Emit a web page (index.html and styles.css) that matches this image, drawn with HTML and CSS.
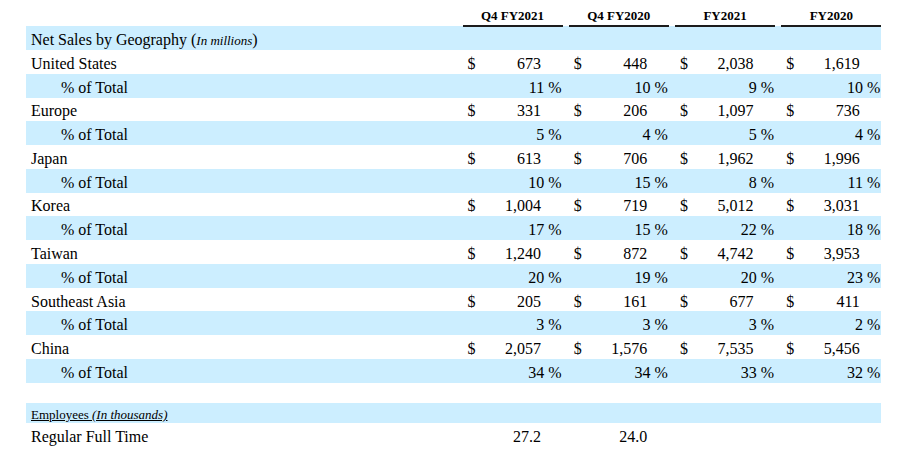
FILE: index.html
```html
<!DOCTYPE html>
<html>
<head>
<meta charset="utf-8">
<link rel="stylesheet" href="styles.css">
</head>
<body>
<table class="geo">
  <colgroup>
    <col class="c-label">
    <col class="c-dol"><col class="c-num"><col class="c-pc">
    <col class="c-gap">
    <col class="c-dol"><col class="c-num"><col class="c-pc">
    <col class="c-gap">
    <col class="c-dol"><col class="c-num"><col class="c-pc">
    <col class="c-gap">
    <col class="c-dol"><col class="c-num"><col class="c-pc">
  </colgroup>
  <thead>
    <tr class="head">
      <th></th>
      <th colspan="3" class="colhead">Q4 FY2021</th><th></th>
      <th colspan="3" class="colhead">Q4 FY2020</th><th></th>
      <th colspan="3" class="colhead">FY2021</th><th></th>
      <th colspan="3" class="colhead">FY2020</th>
    </tr>
  </thead>
  <tbody>
    <tr class="section blue">
      <td class="label">Net Sales by Geography (<span class="note">In millions</span>)</td>
      <td colspan="15"></td>
    </tr>

    <tr class="row">
      <td class="label">United States</td>
      <td class="dol">$</td><td class="num">673</td><td></td><td></td>
      <td class="dol">$</td><td class="num">448</td><td></td><td></td>
      <td class="dol">$</td><td class="num">2,038</td><td></td><td></td>
      <td class="dol">$</td><td class="num">1,619</td><td></td>
    </tr>
    <tr class="row blue">
      <td class="label sub">% of Total</td>
      <td colspan="3" class="pct">11 %</td><td></td>
      <td colspan="3" class="pct">10 %</td><td></td>
      <td colspan="3" class="pct">9 %</td><td></td>
      <td colspan="3" class="pct">10 %</td>
    </tr>

    <tr class="row">
      <td class="label">Europe</td>
      <td class="dol">$</td><td class="num">331</td><td></td><td></td>
      <td class="dol">$</td><td class="num">206</td><td></td><td></td>
      <td class="dol">$</td><td class="num">1,097</td><td></td><td></td>
      <td class="dol">$</td><td class="num">736</td><td></td>
    </tr>
    <tr class="row blue">
      <td class="label sub">% of Total</td>
      <td colspan="3" class="pct">5 %</td><td></td>
      <td colspan="3" class="pct">4 %</td><td></td>
      <td colspan="3" class="pct">5 %</td><td></td>
      <td colspan="3" class="pct">4 %</td>
    </tr>

    <tr class="row">
      <td class="label">Japan</td>
      <td class="dol">$</td><td class="num">613</td><td></td><td></td>
      <td class="dol">$</td><td class="num">706</td><td></td><td></td>
      <td class="dol">$</td><td class="num">1,962</td><td></td><td></td>
      <td class="dol">$</td><td class="num">1,996</td><td></td>
    </tr>
    <tr class="row blue">
      <td class="label sub">% of Total</td>
      <td colspan="3" class="pct">10 %</td><td></td>
      <td colspan="3" class="pct">15 %</td><td></td>
      <td colspan="3" class="pct">8 %</td><td></td>
      <td colspan="3" class="pct">11 %</td>
    </tr>

    <tr class="row">
      <td class="label">Korea</td>
      <td class="dol">$</td><td class="num">1,004</td><td></td><td></td>
      <td class="dol">$</td><td class="num">719</td><td></td><td></td>
      <td class="dol">$</td><td class="num">5,012</td><td></td><td></td>
      <td class="dol">$</td><td class="num">3,031</td><td></td>
    </tr>
    <tr class="row blue">
      <td class="label sub">% of Total</td>
      <td colspan="3" class="pct">17 %</td><td></td>
      <td colspan="3" class="pct">15 %</td><td></td>
      <td colspan="3" class="pct">22 %</td><td></td>
      <td colspan="3" class="pct">18 %</td>
    </tr>

    <tr class="row">
      <td class="label">Taiwan</td>
      <td class="dol">$</td><td class="num">1,240</td><td></td><td></td>
      <td class="dol">$</td><td class="num">872</td><td></td><td></td>
      <td class="dol">$</td><td class="num">4,742</td><td></td><td></td>
      <td class="dol">$</td><td class="num">3,953</td><td></td>
    </tr>
    <tr class="row blue">
      <td class="label sub">% of Total</td>
      <td colspan="3" class="pct">20 %</td><td></td>
      <td colspan="3" class="pct">19 %</td><td></td>
      <td colspan="3" class="pct">20 %</td><td></td>
      <td colspan="3" class="pct">23 %</td>
    </tr>

    <tr class="row">
      <td class="label">Southeast Asia</td>
      <td class="dol">$</td><td class="num">205</td><td></td><td></td>
      <td class="dol">$</td><td class="num">161</td><td></td><td></td>
      <td class="dol">$</td><td class="num">677</td><td></td><td></td>
      <td class="dol">$</td><td class="num">411</td><td></td>
    </tr>
    <tr class="row blue">
      <td class="label sub">% of Total</td>
      <td colspan="3" class="pct">3 %</td><td></td>
      <td colspan="3" class="pct">3 %</td><td></td>
      <td colspan="3" class="pct">3 %</td><td></td>
      <td colspan="3" class="pct">2 %</td>
    </tr>

    <tr class="row">
      <td class="label">China</td>
      <td class="dol">$</td><td class="num">2,057</td><td></td><td></td>
      <td class="dol">$</td><td class="num">1,576</td><td></td><td></td>
      <td class="dol">$</td><td class="num">7,535</td><td></td><td></td>
      <td class="dol">$</td><td class="num">5,456</td><td></td>
    </tr>
    <tr class="row blue">
      <td class="label sub">% of Total</td>
      <td colspan="3" class="pct">34 %</td><td></td>
      <td colspan="3" class="pct">34 %</td><td></td>
      <td colspan="3" class="pct">33 %</td><td></td>
      <td colspan="3" class="pct">32 %</td>
    </tr>

    <tr class="spacer"><td colspan="16"></td></tr>

    <tr class="emp blue">
      <td class="label small"><span class="ul">Employees <span class="note">(In thousands)</span></span></td>
      <td colspan="15"></td>
    </tr>
    <tr class="row">
      <td class="label">Regular Full Time</td>
      <td></td><td class="num">27.2</td><td></td><td></td>
      <td></td><td class="num">24.0</td><td></td><td></td>
      <td></td><td></td><td></td><td></td>
      <td></td><td></td><td></td>
    </tr>
  </tbody>
</table>
</body>
</html>
```

FILE: styles.css
```css
html, body {
  background: #ffffff;
}
body {
  margin: 8px 0 0 26px;
  font-family: "Liberation Serif", "Times New Roman", serif;
  font-size: 16px;
  color: #000000;
}
.geo {
  border-collapse: collapse;
  border-spacing: 0;
  table-layout: fixed;
  width: 855.25px;
}
.c-label { width: 436.5px; }
.c-dol { width: 20px; }
.c-num { width: 58.5px; }
.c-pc { width: 21.5px; }
.c-gap { width: 6.25px; }

.geo td, .geo th {
  padding: 0;
  white-space: nowrap;
  vertical-align: middle;
}
.geo tbody td {
  padding-top: 4px;
}
.head th {
  height: 16px;
}
.geo .colhead {
  font-size: 13px;
  font-weight: bold;
  text-align: center;
  padding: 0 0 1px;
  border-bottom: 2px solid #1c1c1c;
  vertical-align: bottom;
}
.blue {
  background: #cceeff;
}
.section {
  height: 24px;
}
.row {
  height: 23.77px;
}
.geo .label {
  padding-left: 5px;
  text-align: left;
}
.geo .sub {
  padding-left: 35px;
}
.note {
  font-style: italic;
  font-size: 13px;
}
.geo .dol {
  padding-left: 5px;
  text-align: left;
}
.geo .num {
  text-align: right;
}
.geo .pct {
  text-align: right;
  padding-right: 1px;
}
.spacer {
  height: 20px;
}
.emp {
  height: 20px;
}
.geo .small {
  font-size: 13px;
}
.ul {
  text-decoration: underline;
}
```
